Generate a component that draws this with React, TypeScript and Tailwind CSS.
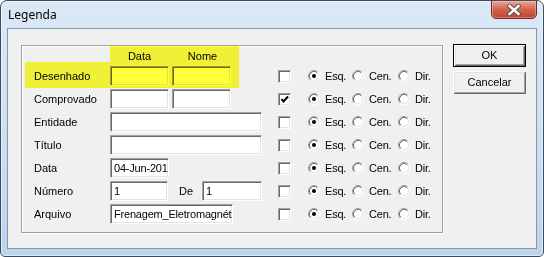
import React from "react";

const sunken =
  "border border-t-[#a0a0a0] border-l-[#a0a0a0] border-b-white border-r-white shadow-[inset_1px_1px_0_#696969,inset_-1px_-1px_0_#e3e3e3] bg-white";

function Field({ w, text }: { w: string; text?: string }) {
  return (
    <div
      className={`h-[20px] ${w} ${sunken} overflow-hidden whitespace-nowrap pl-[3px] leading-[18px] text-[11px] tracking-[-0.2px]`}
    >
      {text}
    </div>
  );
}

function Check({ checked }: { checked?: boolean }) {
  return (
    <div className={`w-[13px] h-[13px] ${sunken} flex items-center justify-center`}>
      {checked && (
        <svg width="9" height="9" viewBox="0 0 9 9">
          <path d="M1.5 4 L3.5 6.5 L8 1.5" stroke="#000" strokeWidth="2" fill="none" />
        </svg>
      )}
    </div>
  );
}

function Radio({ on }: { on?: boolean }) {
  return (
    <svg width="12" height="12" viewBox="0 0 12 12" className="shrink-0">
      <circle cx="6" cy="6" r="4.5" fill="#fff" />
      <path d="M2.11 9.89 A5.5 5.5 0 0 1 9.89 2.11" stroke="#a0a0a0" strokeWidth="1" fill="none" />
      <path d="M9.89 2.11 A5.5 5.5 0 0 1 2.11 9.89" stroke="#ffffff" strokeWidth="1" fill="none" />
      <path d="M2.82 9.18 A4.5 4.5 0 0 1 9.18 2.82" stroke="#696969" strokeWidth="1" fill="none" />
      <path d="M9.18 2.82 A4.5 4.5 0 0 1 2.82 9.18" stroke="#e3e3e3" strokeWidth="1" fill="none" />
      {on && <circle cx="6" cy="6" r="2" fill="#000" />}
    </svg>
  );
}

function Align() {
  return (
    <div className="flex items-center ml-[17px] tracking-[-0.2px]">
      <div className="flex items-center w-[44px]">
        <Radio on />
        <span className="ml-[5px]">Esq.</span>
      </div>
      <div className="flex items-center w-[46px]">
        <Radio />
        <span className="ml-[5px]">Cen.</span>
      </div>
      <div className="flex items-center">
        <Radio />
        <span className="ml-[5px]">Dir.</span>
      </div>
    </div>
  );
}

function Row({
  label,
  checked,
  children,
}: {
  label: string;
  checked?: boolean;
  children: React.ReactNode;
}) {
  return (
    <div className="flex items-center h-[20px]">
      <div className="w-[88px] pl-[12px] whitespace-nowrap">{label}</div>
      <div className="w-[168px] flex items-center">{children}</div>
      <Check checked={checked} />
      <Align />
    </div>
  );
}

function Button({ label, def }: { label: string; def?: boolean }) {
  return (
    <div
      className={`w-[73px] h-[23px] flex items-center justify-center bg-[#f0f0f0] ${
        def
          ? "border border-black shadow-[inset_1px_1px_0_#fff,inset_-1px_-1px_0_#696969,inset_2px_2px_0_#e3e3e3,inset_-2px_-2px_0_#a0a0a0]"
          : "shadow-[inset_1px_1px_0_#fff,inset_-1px_-1px_0_#696969,inset_2px_2px_0_#e3e3e3,inset_-2px_-2px_0_#a0a0a0]"
      }`}
    >
      {label}
    </div>
  );
}

export default function App() {
  return (
    <div className="w-[544px] h-[257px] bg-white">
      <div className="w-[544px] h-[257px] flex flex-col rounded-t-[7px] rounded-b-[5px] border border-[#3c4b5e] bg-gradient-to-b from-[#dbe8f6] via-[#cfe0f3] to-[#bcd3ec] shadow-[inset_0_0_0_1px_rgba(255,255,255,0.55)] overflow-hidden">
        {/* title bar */}
        <div className="h-[27px] flex items-start shrink-0">
          <div className="self-center pl-[7px] text-[12px] text-black font-['Segoe_UI','Noto_Sans',sans-serif] leading-none">
            Legenda
          </div>
          <div className="ml-auto mr-[6px] -mt-px w-[46px] h-[19px] rounded-b-[5px] border border-[#6a2a20] bg-gradient-to-b from-[#e9a694] via-[#d0624c] to-[#c2412b] shadow-[inset_0_0_0_1px_rgba(255,210,200,0.45)] flex items-center justify-center">
            <svg width="14" height="12" viewBox="0 0 14 12">
              <path d="M2.5 2 L11.5 10 M11.5 2 L2.5 10" stroke="#4a4a4a" strokeWidth="4.2" strokeLinecap="square" />
              <path d="M2.5 2 L11.5 10 M11.5 2 L2.5 10" stroke="#ffffff" strokeWidth="2.4" strokeLinecap="square" />
            </svg>
          </div>
        </div>

        {/* client area */}
        <div className="mx-[6px] h-[221px] shrink-0 border border-[#8298b2] bg-[#f0f0f0] flex items-start pt-[15px] pl-[13px] text-[11px] text-black font-['Liberation_Sans',Arial,sans-serif]">
          {/* group */}
          <div className="relative mt-[1px] w-[422px] h-[188px] border border-[#a0a0a0] shadow-[inset_1px_1px_0_#fff,1px_1px_0_#fff] flex flex-col">
            <div className="flex items-start h-[20px] shrink-0 pt-[4px]">
              <div className="w-[88px]" />
              <div className="w-[59px] text-center leading-[13px]">Data</div>
              <div className="w-[59px] ml-[4px] text-center leading-[13px]">Nome</div>
            </div>
            <div className="flex flex-col gap-[3px]">
              <Row label="Desenhado">
                <Field w="w-[59px]" />
                <div className="ml-[3px]">
                  <Field w="w-[59px]" />
                </div>
              </Row>
              <Row label="Comprovado" checked>
                <Field w="w-[59px]" />
                <div className="ml-[3px]">
                  <Field w="w-[59px]" />
                </div>
              </Row>
              <Row label="Entidade">
                <Field w="w-[152px]" />
              </Row>
              <Row label="Título">
                <Field w="w-[152px]" />
              </Row>
              <Row label="Data">
                <Field w="w-[59px]" text="04-Jun-2013" />
              </Row>
              <Row label="Número">
                <Field w="w-[58px]" text="1" />
                <div className="w-[34px] pl-[11px]">De</div>
                <Field w="w-[60px]" text="1" />
              </Row>
              <Row label="Arquivo">
                <Field w="w-[123px]" text="Frenagem_Eletromagnética" />
              </Row>
            </div>
            {/* highlight overlay */}
            <div className="absolute left-[88px] top-0 w-[129px] h-[16px] bg-[#ffff3a] mix-blend-multiply pointer-events-none" />
            <div className="absolute left-[3px] top-[16px] w-[214px] h-[26px] bg-[#ffff3a] mix-blend-multiply pointer-events-none" />
          </div>

          {/* buttons */}
          <div className="ml-[10px] flex flex-col gap-[4px]">
            <Button label="OK" def />
            <Button label="Cancelar" />
          </div>
        </div>
      </div>
    </div>
  );
}
